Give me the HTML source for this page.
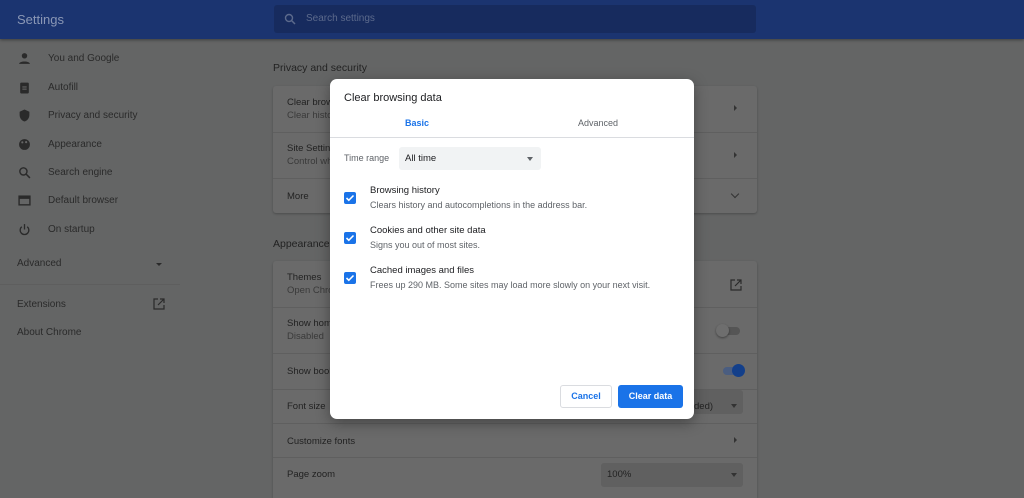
<!DOCTYPE html>
<html><head><meta charset="utf-8"><style>
*{box-sizing:border-box;margin:0;padding:0}
html,body{width:1024px;height:498px;overflow:hidden}
body{background:#646565;font-family:"Liberation Sans",sans-serif;position:relative;color:#1a1a1a}
.hdr{position:absolute;left:0;top:0;width:1024px;height:39px;background:#1b3470;box-shadow:0 1px 3px rgba(0,0,0,.4)}
.hdr .t{position:absolute;left:17px;top:12px;font-size:13px;color:#8a97b5}
.srch{position:absolute;left:274px;top:5px;width:482px;height:28px;background:#172b5e;border-radius:3px}
.srch span{position:absolute;left:32px;top:8px;font-size:10px;color:#5c6a8c}
.it{position:absolute;left:48px;font-size:10px;color:#2a2a2a}
.ic{position:absolute;left:18px;width:13px;height:13px}
.card{position:absolute;left:273px;width:484px;background:#6a6a6a;border-radius:3px;box-shadow:0 1px 2px rgba(0,0,0,.25);overflow:hidden}
.row{position:absolute;left:14px;font-size:9.5px;color:#222;line-height:13px}
.sub{color:#3a3a3a}
.sep{position:absolute;left:0;width:100%;height:1px;background:#5f5f5f}
.h{position:absolute;left:273px;font-size:10.5px;color:#222}
.dlg{position:absolute;left:330px;top:79px;width:364px;height:340px;background:#fff;border-radius:7px;box-shadow:0 4px 14px rgba(0,0,0,.35)}
.dlg .a{position:absolute;font-size:9.5px}
.cb{position:absolute;left:14px;width:12px;height:12px;background:#1a73e8;border-radius:2px}
.cb svg{position:absolute;left:1px;top:1px}
</style></head><body>
<div class="hdr"><div class="t">Settings</div>
<div class="srch"><svg style="position:absolute;left:10px;top:8px" width="12" height="12" viewBox="0 0 12 12"><circle cx="5" cy="5" r="3.5" fill="none" stroke="#5c6a8c" stroke-width="1.4"/><path d="M7.5 7.5L11 11" stroke="#5c6a8c" stroke-width="1.5"/></svg><span>Search settings</span></div></div>

<svg class="ic" style="top:52px" viewBox="0 0 12 12"><circle cx="6" cy="3.5" r="2.5" fill="#2a2a2a"/><path d="M1 11c0-3 10-3 10 0z" fill="#2a2a2a"/></svg>
<div class="it" style="top:53px">You and Google</div>
<svg class="ic" style="top:81px" viewBox="0 0 12 12"><rect x="2" y="1.5" width="8" height="10" rx="1" fill="#2a2a2a"/><rect x="4" y="5" width="4" height="1" fill="#666"/><rect x="4" y="7" width="4" height="1" fill="#666"/></svg>
<div class="it" style="top:82px">Autofill</div>
<svg class="ic" style="top:109px" viewBox="0 0 12 12"><path d="M6 .5L1.5 2.5v3c0 3 2 5.3 4.5 6 2.5-.7 4.5-3 4.5-6v-3z" fill="#2a2a2a"/></svg>
<div class="it" style="top:110px">Privacy and security</div>
<svg class="ic" style="top:138px" viewBox="0 0 12 12"><circle cx="6" cy="6" r="5" fill="#2a2a2a"/><circle cx="4" cy="4" r="1" fill="#666"/><circle cx="7.5" cy="3.8" r="1" fill="#666"/></svg>
<div class="it" style="top:139px">Appearance</div>
<svg class="ic" style="top:166px" viewBox="0 0 12 12"><circle cx="5" cy="5" r="3.3" fill="none" stroke="#2a2a2a" stroke-width="1.3"/><path d="M7.5 7.5L11 11" stroke="#2a2a2a" stroke-width="1.4"/></svg>
<div class="it" style="top:167px">Search engine</div>
<svg class="ic" style="top:194px" viewBox="0 0 12 12"><rect x="1" y="2" width="10" height="8" fill="none" stroke="#2a2a2a" stroke-width="1.3"/><rect x="1" y="2" width="10" height="2.5" fill="#2a2a2a"/></svg>
<div class="it" style="top:195px">Default browser</div>
<svg class="ic" style="top:223px" viewBox="0 0 12 12"><path d="M3.5 3.5A4 4 0 1 0 8.5 3.5" fill="none" stroke="#2a2a2a" stroke-width="1.2"/><path d="M6 1v5" stroke="#2a2a2a" stroke-width="1.2"/></svg>
<div class="it" style="top:224px">On startup</div>
<div class="it" style="left:17px;top:258px">Advanced</div>
<div style="position:absolute;left:156px;top:263px;border:3px solid transparent;border-top:3px solid #2a2a2a"></div>
<div style="position:absolute;left:0;top:284px;width:180px;height:1px;background:#5e5e5e"></div>
<div class="it" style="left:17px;top:299px">Extensions</div>
<svg style="position:absolute;left:153px;top:298px" width="12" height="12" viewBox="0 0 12 12"><path d="M5 1H1v10h10V7" fill="none" stroke="#2a2a2a" stroke-width="1.2"/><path d="M7 1h4v4M11 1L5 7" fill="none" stroke="#2a2a2a" stroke-width="1.2"/></svg>
<div class="it" style="left:17px;top:327px">About Chrome</div>

<div class="h" style="top:62px">Privacy and security</div>
<div class="card" style="top:86px;height:127px">
<div class="row" style="top:10px">Clear browsing data<br><span class="sub">Clear history</span></div>
<div class="sep" style="top:46px"></div>
<div class="row" style="top:56px">Site Settings<br><span class="sub">Control what</span></div>
<div class="sep" style="top:92px"></div>
<div class="row" style="top:104px">More</div>
<div style="position:absolute;left:461px;top:19px;border:3px solid transparent;border-left:3px solid #333"></div>
<div style="position:absolute;left:461px;top:66px;border:3px solid transparent;border-left:3px solid #333"></div>
<div style="position:absolute;left:459px;top:105px;width:6px;height:6px;border-right:1.3px solid #333;border-bottom:1.3px solid #333;transform:rotate(45deg)"></div>
</div>
<div class="h" style="top:238px">Appearance</div>
<div class="card" style="top:261px;height:237px;border-radius:3px 3px 0 0">
<div class="row" style="top:10px">Themes<br><span class="sub">Open Chrome</span></div>
<div class="sep" style="top:46px"></div>
<div class="row" style="top:56px">Show home<br><span class="sub">Disabled</span></div>
<div class="sep" style="top:92px"></div>
<div class="row" style="top:104px">Show bookmarks</div>
<div class="sep" style="top:128px"></div>
<div class="row" style="top:139px">Font size</div>
<div class="sep" style="top:162px"></div>
<div class="row" style="top:174px">Customize fonts</div>
<div class="sep" style="top:196px"></div>
<div class="row" style="top:207px">Page zoom</div>
<svg style="position:absolute;left:457px;top:18px" width="12" height="12" viewBox="0 0 12 12"><path d="M5 1H1v10h10V7" fill="none" stroke="#2a2a2a" stroke-width="1.2"/><path d="M7 1h4v4M11 1L5 7" fill="none" stroke="#2a2a2a" stroke-width="1.2"/></svg>
<div style="position:absolute;left:446px;top:66px;width:21px;height:8px;border-radius:4px;background:#555"></div>
<div style="position:absolute;left:443px;top:63px;width:13px;height:13px;border-radius:50%;background:#6e6e6e;box-shadow:0 1px 2px rgba(0,0,0,.4)"></div>
<div style="position:absolute;left:450px;top:106px;width:21px;height:8px;border-radius:4px;background:#4a5d80"></div>
<div style="position:absolute;left:459px;top:103px;width:13px;height:13px;border-radius:50%;background:#133f8a"></div>
<div style="position:absolute;left:328px;top:129px;width:142px;height:24px;background:#606060;border-radius:3px"></div>
<div class="row" style="left:421px;top:139px">ded)</div>
<div style="position:absolute;left:458px;top:143px;border:3.5px solid transparent;border-top:4px solid #333"></div>
<div style="position:absolute;left:461px;top:176px;border:3px solid transparent;border-left:3px solid #333"></div>
<div style="position:absolute;left:328px;top:202px;width:142px;height:24px;background:#606060;border-radius:3px;font-size:9.5px;padding:6px 0 0 6px;color:#222">100%</div>
<div style="position:absolute;left:458px;top:212px;border:3.5px solid transparent;border-top:4px solid #333"></div>
</div>

<div class="dlg">
<div class="a" style="left:14px;top:13px;font-size:11px;color:#202124">Clear browsing data</div>
<div class="a" style="left:75px;top:39px;color:#1a73e8;font-weight:bold;font-size:9px">Basic</div>
<div class="a" style="left:248px;top:39px;color:#5f6368;font-size:9px">Advanced</div>
<div style="position:absolute;left:0;top:58px;width:364px;height:1px;background:#dadce0"></div>
<div class="a" style="left:14px;top:74px;color:#5f6368;font-size:9px">Time range</div>
<div style="position:absolute;left:69px;top:68px;width:142px;height:23px;background:#f1f3f4;border-radius:3px"></div>
<div class="a" style="left:75px;top:74px;color:#202124;font-size:9.5px">All time</div>
<div style="position:absolute;left:197px;top:78px;border:3.5px solid transparent;border-top:4px solid #5f6368"></div>
<div class="cb" style="top:113px"><svg width="10" height="10" viewBox="0 0 10 10"><path d="M1.5 5l2.3 2.3L8.5 2.5" fill="none" stroke="#fff" stroke-width="1.6"/></svg></div>
<div class="a" style="left:40px;top:106px;color:#202124">Browsing history</div>
<div class="a" style="left:40px;top:121px;color:#5f6368;font-size:9px">Clears history and autocompletions in the address bar.</div>
<div class="cb" style="top:153px"><svg width="10" height="10" viewBox="0 0 10 10"><path d="M1.5 5l2.3 2.3L8.5 2.5" fill="none" stroke="#fff" stroke-width="1.6"/></svg></div>
<div class="a" style="left:40px;top:146px;color:#202124">Cookies and other site data</div>
<div class="a" style="left:40px;top:161px;color:#5f6368;font-size:9px">Signs you out of most sites.</div>
<div class="cb" style="top:193px"><svg width="10" height="10" viewBox="0 0 10 10"><path d="M1.5 5l2.3 2.3L8.5 2.5" fill="none" stroke="#fff" stroke-width="1.6"/></svg></div>
<div class="a" style="left:40px;top:186px;color:#202124">Cached images and files</div>
<div class="a" style="left:40px;top:201px;color:#5f6368;font-size:9px">Frees up 290 MB. Some sites may load more slowly on your next visit.</div>
<div style="position:absolute;left:230px;top:306px;width:52px;height:23px;border:1px solid #dadce0;border-radius:3px;color:#1a73e8;font-size:9px;font-weight:bold;text-align:center;line-height:21px">Cancel</div>
<div style="position:absolute;left:288px;top:306px;width:65px;height:23px;background:#1a73e8;border-radius:3px;color:#fff;font-size:9px;font-weight:bold;text-align:center;line-height:23px">Clear data</div>
</div>
</body></html>
